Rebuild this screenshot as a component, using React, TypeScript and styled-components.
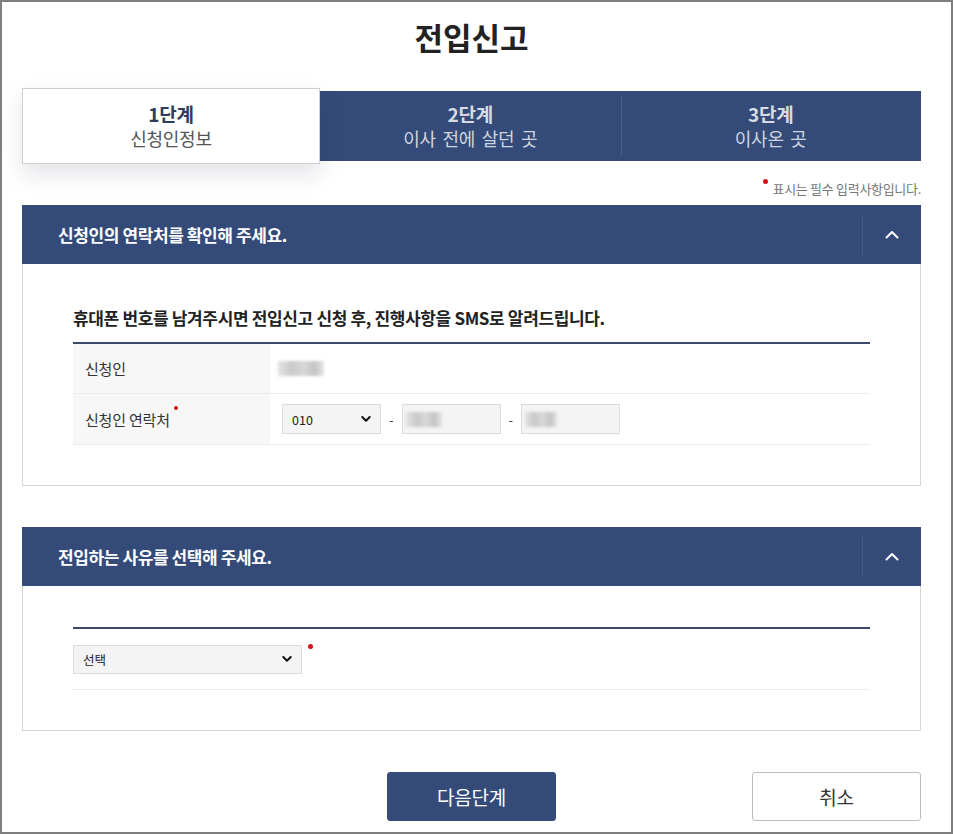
import React from "react";
import styled, { createGlobalStyle } from "styled-components";

const Global = createGlobalStyle`
  html, body { margin: 0; padding: 0; background: #fff; }
  body { font-family: "Noto Sans CJK KR", "Noto Sans", sans-serif; color: #222; }
  * { box-sizing: border-box; }
`;

const NAVY = "#344b79";

const Frame = styled.div`
  width: 953px;
  height: 834px;
  border: 2px solid #7f7f7f;
  padding: 15px 30px 0 20px;
  background: #fff;
  position: relative;
`;

const Title = styled.h1`
  margin: 0;
  font-size: 31px;
  line-height: 40px;
  font-weight: 700;
  text-align: center;
  color: #222;
  letter-spacing: 0;
`;

const Tabs = styled.div`
  margin-top: 31px;
  display: grid;
  grid-template-columns: 298px 1fr 1fr;
  height: 76px;
`;

const Tab = styled.div<{ $active?: boolean; $divider?: boolean }>`
  position: relative;
  display: flex;
  flex-direction: column;
  align-items: center;
  justify-content: center;
  gap: 0;
  background: ${(p) => (p.$active ? "#fff" : NAVY)};
  border: ${(p) => (p.$active ? "1px solid #cdd0d5" : "none")};
  box-shadow: ${(p) => (p.$active ? "0 10px 22px rgba(30,40,60,0.13)" : "none")};
  margin: ${(p) => (p.$active ? "0" : "3px 0")};
  z-index: ${(p) => (p.$active ? 1 : 0)};
  &::before {
    content: "";
    display: ${(p) => (p.$divider ? "block" : "none")};
    position: absolute;
    left: 0;
    top: 5px;
    bottom: 5px;
    width: 1px;
    background: #4a5f88;
  }
`;

const TabStep = styled.div<{ $active?: boolean }>`
  font-size: 19px;
  line-height: 24px;
  height: 24px;
  font-weight: 700;
  color: ${(p) => (p.$active ? "#2e3d5c" : "#d6dbe4")};
  letter-spacing: -0.3px;
`;

const TabName = styled.div<{ $active?: boolean }>`
  font-size: 18px;
  line-height: 24px;
  height: 24px;
  font-weight: 400;
  color: ${(p) => (p.$active ? "#555" : "#cfd5df")};
  letter-spacing: -0.3px;
  word-spacing: 3px;
`;

const Note = styled.div`
  margin-top: 17px;
  text-align: right;
  font-size: 13px;
  line-height: 16px;
  color: #777;
  letter-spacing: -0.3px;
`;

const RedDot = styled.span`
  display: inline-block;
  width: 5px;
  height: 5px;
  border-radius: 50%;
  background: #d3121a;
  vertical-align: top;
  margin-right: 5px;
  margin-top: -2px;
`;

const Section = styled.section<{ $gap?: number }>`
  margin-top: ${(p) => p.$gap ?? 0}px;
`;

const SectionHeader = styled.div`
  height: 59px;
  background: ${NAVY};
  display: flex;
  align-items: center;
  justify-content: space-between;
  padding-left: 36px;
`;

const SectionTitle = styled.h2`
  margin: 0;
  font-size: 17px;
  font-weight: 700;
  color: #fff;
  letter-spacing: -0.4px;
`;

const Toggle = styled.div`
  width: 59px;
  height: 40px;
  border-left: 1px solid #46598a;
  display: flex;
  align-items: center;
  justify-content: center;
`;

const SectionBody = styled.div<{ $top: number }>`
  border: 1px solid #d6d6d6;
  border-top: none;
  padding: ${(p) => p.$top}px 50px 40px 50px;
`;

const Lead = styled.p`
  margin: 0 0 12px;
  font-size: 17px;
  line-height: 24px;
  font-weight: 700;
  color: #222;
  letter-spacing: -0.35px;
`;

const Table = styled.div`
  border-top: 2px solid #3a4a6b;
`;

const Row = styled.div<{ $h?: number }>`
  display: grid;
  grid-template-columns: 197px 1fr;
  height: ${(p) => p.$h ?? 50}px;
  border-bottom: 1px solid #ececec;
`;

const Label = styled.div`
  background: #f7f7f7;
  display: flex;
  align-items: center;
  padding-left: 12px;
  font-size: 15px;
  color: #333;
  letter-spacing: -0.2px;
`;

const LabelDot = styled.span`
  display: inline-block;
  width: 4px;
  height: 4px;
  border-radius: 50%;
  background: #d3121a;
  align-self: flex-start;
  margin-top: 12px;
  margin-left: 4px;
`;

const Value = styled.div`
  display: flex;
  align-items: center;
  padding-left: 12px;
  gap: 8px;
`;

const Blur = styled.span<{ $w: number }>`
  display: inline-block;
  width: ${(p) => p.$w}px;
  height: 15px;
  background: linear-gradient(90deg, #e3e3e3 0%, #c9c9c9 30%, #d8d8d8 55%, #c4c4c4 80%, #e6e6e6 100%);
  filter: blur(1.5px);
`;

const SelectWrap = styled.div<{ $w: number }>`
  position: relative;
  width: ${(p) => p.$w}px;
`;

const Select = styled.select<{ $h: number }>`
  appearance: none;
  -webkit-appearance: none;
  width: 100%;
  height: ${(p) => p.$h}px;
  background: #f4f4f4;
  border: 1px solid #dcdcdc;
  border-radius: 0;
  padding: 0 12px 0 9px;
  font-family: "Noto Sans CJK KR", "Noto Sans", sans-serif;
  font-size: 12.5px;
  color: #222;
  outline: none;
`;

const Caret = styled.svg`
  position: absolute;
  right: 10px;
  top: 50%;
  transform: translateY(-50%);
  pointer-events: none;
`;

const Input = styled.div`
  width: 99px;
  height: 30px;
  background: #f4f4f4;
  border: 1px solid #dcdcdc;
  display: flex;
  align-items: center;
  padding-left: 3px;
`;

const Dash = styled.span`
  font-size: 13px;
  color: #444;
`;

const ReasonRow = styled.div`
  height: 61px;
  display: flex;
  align-items: center;
  border-bottom: 1px solid #ececec;
`;

const ReasonDot = styled.span`
  align-self: flex-start;
  margin-top: 15px;
  margin-left: 6px;
  width: 5px;
  height: 5px;
  border-radius: 50%;
  background: #d3121a;
`;

const Buttons = styled.div`
  margin-top: 41px;
  display: grid;
  grid-template-columns: 1fr 169px 1fr;
  align-items: center;
`;

const Button = styled.button<{ $primary?: boolean }>`
  height: 49px;
  width: 169px;
  border-radius: 3px;
  font-family: "Noto Sans CJK KR", "Noto Sans", sans-serif;
  font-size: 19px;
  letter-spacing: -0.2px;
  background: ${(p) => (p.$primary ? NAVY : "#fff")};
  color: ${(p) => (p.$primary ? "#fff" : "#333")};
  border: ${(p) => (p.$primary ? `1px solid ${NAVY}` : "1px solid #bdbdbd")};
  cursor: pointer;
`;

const EndCell = styled.div`
  display: flex;
  justify-content: flex-end;
`;

const ChevronUp = () => (
  <svg width="14" height="9" viewBox="0 0 14 9" fill="none">
    <path d="M1.5 7.5L7 2L12.5 7.5" stroke="#fff" strokeWidth="2" strokeLinecap="round" strokeLinejoin="round" />
  </svg>
);

const CaretDown = () => (
  <Caret width="10" height="7" viewBox="0 0 10 7" fill="none">
    <path d="M1.3 1.5L5 5.2L8.7 1.5" stroke="#111" strokeWidth="2" strokeLinecap="round" strokeLinejoin="round" />
  </Caret>
);

export default function App() {
  return (
    <>
      <Global />
      <Frame>
        <Title>전입신고</Title>
        <Tabs>
          <Tab $active>
            <TabStep $active>1단계</TabStep>
            <TabName $active>신청인정보</TabName>
          </Tab>
          <Tab>
            <TabStep>2단계</TabStep>
            <TabName>이사 전에 살던 곳</TabName>
          </Tab>
          <Tab $divider>
            <TabStep>3단계</TabStep>
            <TabName>이사온 곳</TabName>
          </Tab>
        </Tabs>
        <Note>
          <RedDot />
          표시는 필수 입력사항입니다.
        </Note>

        <Section $gap={8}>
          <SectionHeader>
            <SectionTitle>신청인의 연락처를 확인해 주세요.</SectionTitle>
            <Toggle>
              <ChevronUp />
            </Toggle>
          </SectionHeader>
          <SectionBody $top={42}>
            <Lead>휴대폰 번호를 남겨주시면 전입신고 신청 후, 진행사항을 SMS로 알려드립니다.</Lead>
            <Table>
              <Row>
                <Label>신청인</Label>
                <Value style={{ paddingLeft: 8 }}>
                  <Blur $w={46} />
                </Value>
              </Row>
              <Row $h={51}>
                <Label>
                  신청인 연락처
                  <LabelDot />
                </Label>
                <Value>
                  <SelectWrap $w={99}>
                    <Select $h={30} defaultValue="010">
                      <option value="010">010</option>
                      <option value="011">011</option>
                      <option value="016">016</option>
                    </Select>
                    <CaretDown />
                  </SelectWrap>
                  <Dash>-</Dash>
                  <Input>
                    <Blur $w={36} />
                  </Input>
                  <Dash>-</Dash>
                  <Input>
                    <Blur $w={32} />
                  </Input>
                </Value>
              </Row>
            </Table>
          </SectionBody>
        </Section>

        <Section $gap={41}>
          <SectionHeader>
            <SectionTitle>전입하는 사유를 선택해 주세요.</SectionTitle>
            <Toggle>
              <ChevronUp />
            </Toggle>
          </SectionHeader>
          <SectionBody $top={41}>
            <Table>
              <ReasonRow>
                <SelectWrap $w={229}>
                  <Select $h={29} defaultValue="">
                    <option value="">선택</option>
                  </Select>
                  <CaretDown />
                </SelectWrap>
                <ReasonDot />
              </ReasonRow>
            </Table>
          </SectionBody>
        </Section>

        <Buttons>
          <div />
          <Button $primary>다음단계</Button>
          <EndCell>
            <Button>취소</Button>
          </EndCell>
        </Buttons>
      </Frame>
    </>
  );
}
